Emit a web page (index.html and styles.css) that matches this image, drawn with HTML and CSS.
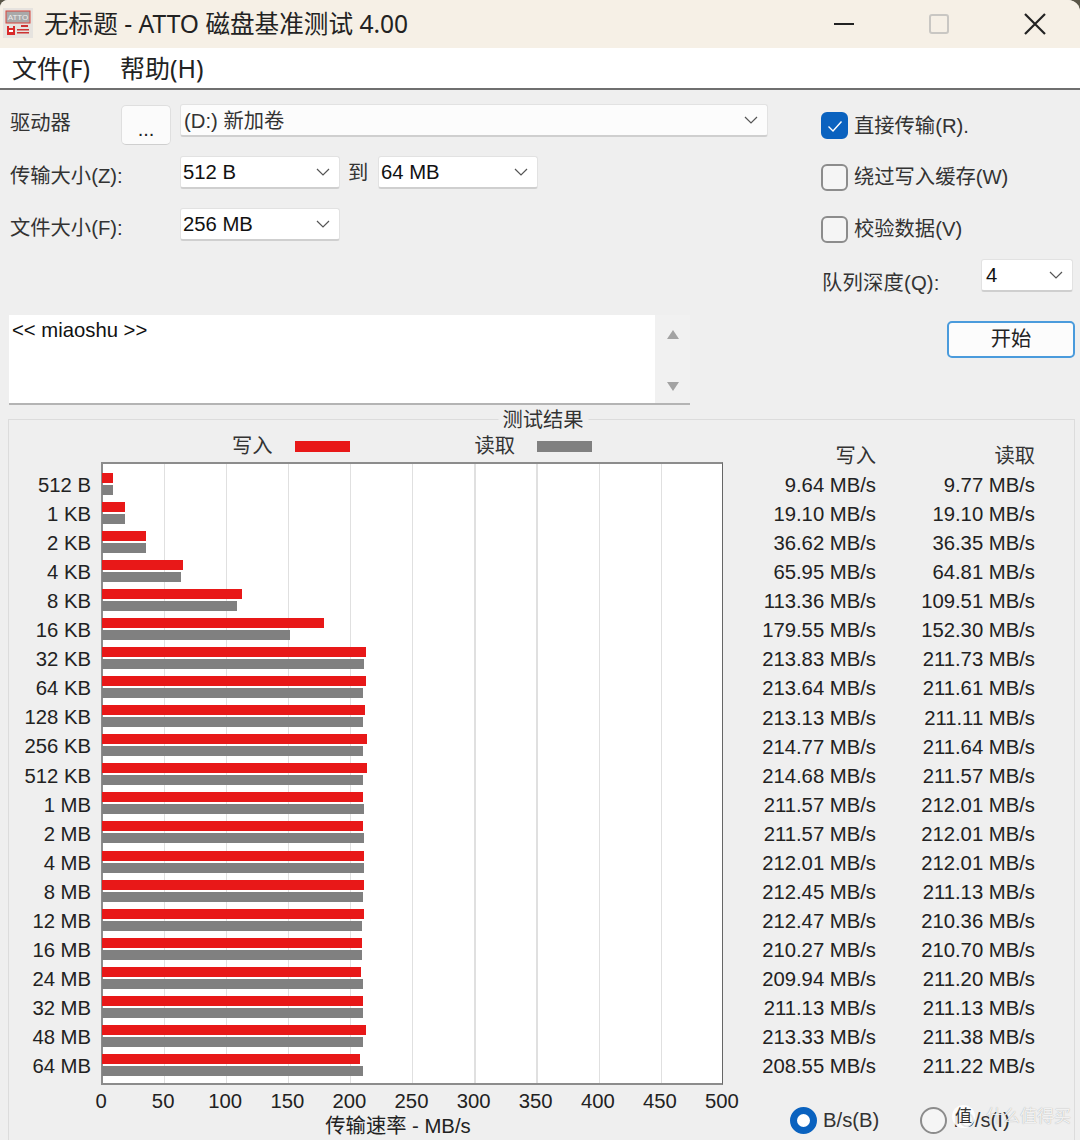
FILE: index.html
```html
<!DOCTYPE html>
<html lang="zh-CN">
<head>
<meta charset="utf-8">
<title>ATTO</title>
<link rel="stylesheet" href="styles.css">
</head>
<body>
<div class="app">
  <header class="titlebar">
    <svg class="appicon" viewBox="0 0 30 30" width="30" height="30">
      <rect width="30" height="30" fill="#e6e3df"/>
      <rect x="3" y="3" width="24" height="12" fill="#a9a9a9" stroke="#d8463f" stroke-width="1"/>
      <text x="15" y="12" font-size="8" font-family="Liberation Sans" fill="#eee" text-anchor="middle">ATTO</text>
      <path d="M4 18h2v2h4v-2h2v9H4z" fill="#d92a2a"/>
      <path d="M6 22h4v2H6z" fill="#fff"/>
      <path d="M18 17h7v2h-7zM14 21h12v1.5H14zM14 24h12v1.5H14z" fill="#c33"/>
    </svg>
    <div class="title">无标题 - ATTO 磁盘基准测试 4.00</div>
    <span class="win-min"></span>
    <span class="win-max"></span>
    <svg class="win-close" viewBox="0 0 22 22" width="22" height="22"><path d="M1 1l20 20M21 1L1 21" stroke="#222" stroke-width="2.2" fill="none"/></svg>
  </header>
  <nav class="menubar"><span>文件(F)</span><span>帮助(H)</span></nav>

  <section class="controls">
    <div class="ctl-left">
      <div class="row">
        <label class="lbl lbl-drive">驱动器</label>
        <button class="dots">...</button>
        <div class="combo combo-drive"><span>(D:) 新加卷</span><svg class="chev" viewBox="0 0 14 8" width="14" height="8"><path d="M1 1l6 6 6-6" fill="none" stroke="#555" stroke-width="1.2"/></svg></div>
      </div>
      <div class="row">
        <label class="lbl">传输大小(Z):</label>
        <div class="combo combo-size"><span>512 B</span><svg class="chev" viewBox="0 0 14 8" width="14" height="8"><path d="M1 1l6 6 6-6" fill="none" stroke="#555" stroke-width="1.2"/></svg></div>
        <span class="to">到</span>
        <div class="combo combo-size"><span>64 MB</span><svg class="chev" viewBox="0 0 14 8" width="14" height="8"><path d="M1 1l6 6 6-6" fill="none" stroke="#555" stroke-width="1.2"/></svg></div>
      </div>
      <div class="row">
        <label class="lbl">文件大小(F):</label>
        <div class="combo combo-size"><span>256 MB</span><svg class="chev" viewBox="0 0 14 8" width="14" height="8"><path d="M1 1l6 6 6-6" fill="none" stroke="#555" stroke-width="1.2"/></svg></div>
      </div>
      <div class="memo">
        <div class="memo-text">&lt;&lt; miaoshu &gt;&gt;</div>
        <div class="memo-scroll">
          <svg viewBox="0 0 12 9" width="12" height="9"><path d="M6 0l6 9H0z" fill="#a3a3a3"/></svg>
          <svg viewBox="0 0 12 9" width="12" height="9"><path d="M0 0h12L6 9z" fill="#a3a3a3"/></svg>
        </div>
      </div>
    </div>
    <div class="ctl-right">
      <div class="check-row"><span class="check on"><svg viewBox="0 0 16 12" width="16" height="12"><path d="M1.5 6.5l4.5 4.5 8.5-9.5" fill="none" stroke="#fff" stroke-width="1.4"/></svg></span><span class="first-check">直接传输(R).</span></div>
      <div class="check-row"><span class="check"></span><span>绕过写入缓存(W)</span></div>
      <div class="check-row"><span class="check"></span><span>校验数据(V)</span></div>
      <div class="queue">
        <label class="queue-lbl">队列深度(Q):</label>
        <div class="combo combo-queue"><span>4</span><svg class="chev" viewBox="0 0 14 8" width="14" height="8"><path d="M1 1l6 6 6-6" fill="none" stroke="#555" stroke-width="1.2"/></svg></div>
      </div>
      <button class="start">开始</button>
    </div>
  </section>

  <section class="results">
    <div class="group-title">测试结果</div>
    <div class="results-body">
      <div class="chart">
        <div class="legend">
          <span>写入</span><i class="swatch red"></i>
          <span class="legend-read">读取</span><i class="swatch gray"></i>
        </div>
        <div class="chart-main">
          <div class="sizes">
            <div>512 B</div><div>1 KB</div><div>2 KB</div><div>4 KB</div><div>8 KB</div><div>16 KB</div><div>32 KB</div><div>64 KB</div><div>128 KB</div><div>256 KB</div><div>512 KB</div><div>1 MB</div><div>2 MB</div><div>4 MB</div><div>8 MB</div><div>12 MB</div><div>16 MB</div><div>24 MB</div><div>32 MB</div><div>48 MB</div><div>64 MB</div>
          </div>
          <div class="plot">
            <div class="bars"><b class="w" style="--v:9.64"></b><b class="r" style="--v:9.77"></b></div>
            <div class="bars"><b class="w" style="--v:19.10"></b><b class="r" style="--v:19.10"></b></div>
            <div class="bars"><b class="w" style="--v:36.62"></b><b class="r" style="--v:36.35"></b></div>
            <div class="bars"><b class="w" style="--v:65.95"></b><b class="r" style="--v:64.81"></b></div>
            <div class="bars"><b class="w" style="--v:113.36"></b><b class="r" style="--v:109.51"></b></div>
            <div class="bars"><b class="w" style="--v:179.55"></b><b class="r" style="--v:152.30"></b></div>
            <div class="bars"><b class="w" style="--v:213.83"></b><b class="r" style="--v:211.73"></b></div>
            <div class="bars"><b class="w" style="--v:213.64"></b><b class="r" style="--v:211.61"></b></div>
            <div class="bars"><b class="w" style="--v:213.13"></b><b class="r" style="--v:211.11"></b></div>
            <div class="bars"><b class="w" style="--v:214.77"></b><b class="r" style="--v:211.64"></b></div>
            <div class="bars"><b class="w" style="--v:214.68"></b><b class="r" style="--v:211.57"></b></div>
            <div class="bars"><b class="w" style="--v:211.57"></b><b class="r" style="--v:212.01"></b></div>
            <div class="bars"><b class="w" style="--v:211.57"></b><b class="r" style="--v:212.01"></b></div>
            <div class="bars"><b class="w" style="--v:212.01"></b><b class="r" style="--v:212.01"></b></div>
            <div class="bars"><b class="w" style="--v:212.45"></b><b class="r" style="--v:211.13"></b></div>
            <div class="bars"><b class="w" style="--v:212.47"></b><b class="r" style="--v:210.36"></b></div>
            <div class="bars"><b class="w" style="--v:210.27"></b><b class="r" style="--v:210.70"></b></div>
            <div class="bars"><b class="w" style="--v:209.94"></b><b class="r" style="--v:211.20"></b></div>
            <div class="bars"><b class="w" style="--v:211.13"></b><b class="r" style="--v:211.13"></b></div>
            <div class="bars"><b class="w" style="--v:213.33"></b><b class="r" style="--v:211.38"></b></div>
            <div class="bars"><b class="w" style="--v:208.55"></b><b class="r" style="--v:211.22"></b></div>
          </div>
        </div>
        <div class="ticks"><span>0</span><span>50</span><span>100</span><span>150</span><span>200</span><span>250</span><span>300</span><span>350</span><span>400</span><span>450</span><span>500</span></div>
        <div class="axis-title">传输速率 - MB/s</div>
      </div>
      <div class="values">
        <div class="vgrid">
          <div class="vh">写入</div><div class="vh">读取</div>
          <div>9.64 MB/s</div><div>9.77 MB/s</div>
          <div>19.10 MB/s</div><div>19.10 MB/s</div>
          <div>36.62 MB/s</div><div>36.35 MB/s</div>
          <div>65.95 MB/s</div><div>64.81 MB/s</div>
          <div>113.36 MB/s</div><div>109.51 MB/s</div>
          <div>179.55 MB/s</div><div>152.30 MB/s</div>
          <div>213.83 MB/s</div><div>211.73 MB/s</div>
          <div>213.64 MB/s</div><div>211.61 MB/s</div>
          <div>213.13 MB/s</div><div>211.11 MB/s</div>
          <div>214.77 MB/s</div><div>211.64 MB/s</div>
          <div>214.68 MB/s</div><div>211.57 MB/s</div>
          <div>211.57 MB/s</div><div>212.01 MB/s</div>
          <div>211.57 MB/s</div><div>212.01 MB/s</div>
          <div>212.01 MB/s</div><div>212.01 MB/s</div>
          <div>212.45 MB/s</div><div>211.13 MB/s</div>
          <div>212.47 MB/s</div><div>210.36 MB/s</div>
          <div>210.27 MB/s</div><div>210.70 MB/s</div>
          <div>209.94 MB/s</div><div>211.20 MB/s</div>
          <div>211.13 MB/s</div><div>211.13 MB/s</div>
          <div>213.33 MB/s</div><div>211.38 MB/s</div>
          <div>208.55 MB/s</div><div>211.22 MB/s</div>
        </div>
        <div class="radios">
          <span class="radio on"></span><span class="radio-lbl">B/s(B)</span>
          <span class="radio second"></span><span class="radio-lbl">IO/s(I)</span>
        </div>
      </div>
    </div>
  </section>

  <div class="watermark"><span class="wm-circle">值</span><span class="wm-text">什么值得买</span></div>
</div>
</body>
</html>
```
FILE: styles.css
```css
* { box-sizing: border-box; }
html, body { margin: 0; padding: 0; background: #5a5648; }
body { width: 1080px; height: 1140px; overflow: hidden; }
.app {
  position: relative;
  width: 1080px;
  height: 1140px;
  overflow: hidden;
  background: #efefef;
  border-radius: 8px 12px 0 0;
  color: #1c1c1c;
  font-family: "Liberation Sans", "Noto Sans CJK SC", sans-serif;
  font-size: 20.3px;
  line-height: 29px;
}

/* title bar */
.titlebar {
  display: flex;
  align-items: center;
  height: 48px;
  background: #f6f0e6;
  padding: 0 34px 0 3px;
}
.appicon { flex: none; margin-top: -2px; }
.title {
  margin-left: 11px;
  font-family: "Noto Sans", "Noto Sans CJK SC", sans-serif;
  font-size: 24.6px;
  line-height: 32px;
  color: #222;
  flex: 1;
}
.win-min { width: 20px; height: 2px; background: #222; }
.win-max { width: 20px; height: 20px; margin-left: 75px; border: 2px solid #c9c7c3; border-radius: 3px; }
.win-close { margin-left: 75px; }

/* menu */
.menubar {
  display: flex;
  gap: 30px;
  height: 42px;
  padding: 4px 0 0 12px;
  background: #fff;
  border-bottom: 2px solid #6f6f6f;
  font-family: "Noto Sans", "Noto Sans CJK SC", sans-serif;
  font-size: 25px;
  line-height: 32px;
  color: #222;
}

/* controls */
.controls { display: flex; height: 329px; }
.ctl-left { width: 768px; padding: 14px 0 0 10px; flex: none; }
.row { display: flex; align-items: flex-start; height: 52px; }
.lbl { width: 170px; padding-top: 6px; color: #333; flex: none; }
.lbl-drive { width: 111px; padding-top: 5px; }
.dots {
  width: 50px;
  height: 40px;
  margin: 1px 9px 0 0;
  padding: 8px 0 0;
  background: #fbfbfb;
  border: 1px solid #dfdfdf;
  border-bottom-color: #cfcfcf;
  border-radius: 5px;
  font: 20px/20px "Liberation Sans", sans-serif;
  color: #222;
}
.combo {
  display: flex;
  align-items: center;
  justify-content: space-between;
  height: 33px;
  padding: 0 9px 0 2px;
  background: #fff;
  border: 1px solid #e2e2e2;
  border-bottom: 2px solid #cfcfcf;
  border-radius: 3px;
  color: #111;
  flex: none;
}
.combo-drive { width: 588px; background: #fcfcfc; padding-left: 3px; color: #333; }
.combo-drive span { padding-top: 2px; }
.combo-size { width: 160px; }
.combo-queue { width: 92px; padding-left: 4px; }
.to { width: 38px; padding: 3px 0 0 8px; color: #333; flex: none; }
.memo {
  display: flex;
  width: 681px;
  height: 90px;
  margin: 55px 0 0 -1px;
  background: #fff;
  border-bottom: 2px solid #b4b4b4;
}
.memo-text { flex: 1; padding: 1px 0 0 3px; color: #111; }
.memo-scroll {
  display: flex;
  flex-direction: column;
  align-items: center;
  justify-content: space-between;
  width: 35px;
  padding: 15px 0 12px;
  background: #f1f1f1;
}
.ctl-right { width: 254px; margin-left: 53px; padding-top: 22px; flex: none; }
.check-row { display: flex; align-items: center; gap: 6px; height: 27px; margin-bottom: 25px; color: #333; }
.first-check { padding-top: 2px; }
.check {
  display: flex;
  align-items: center;
  justify-content: center;
  width: 27px;
  height: 27px;
  background: #f5f5f5;
  border: 2px solid #8c8c8c;
  border-radius: 6px;
  flex: none;
}
.check.on { background: #0a62bf; border-color: #0a62bf; }
.queue { display: flex; align-items: flex-start; justify-content: space-between; margin: -9px 2px 0 1px; }
.queue-lbl { padding-top: 10px; color: #333; letter-spacing: .2px; }
.start {
  display: block;
  width: 128px;
  height: 37px;
  margin: 23px 0 0 126px;
  padding: 0;
  background: #fcfcfc;
  border: 2px solid #4a9bdc;
  border-radius: 5px;
  font: 20.3px/29px "Liberation Sans", "Noto Sans CJK SC", sans-serif;
  color: #222;
}

/* results */
.results {
  margin: 0 5px 0 8px;
  height: 740px;
  border: 1px solid #dcdcdc;
  border-bottom: 0;
}
.group-title {
  width: 90px;
  height: 22px;
  margin: -11px auto 0;
  transform: translateX(1.5px);
  background: #efefef;
  text-align: center;
  line-height: 22px;
  color: #333;
}
.results-body { display: flex; }
.chart { width: 714px; flex: none; }
.legend { display: flex; align-items: center; height: 30.7px; padding: 0 0 0 223px; color: #333; }
.swatch { display: block; width: 55px; height: 11px; margin-left: 22px; }
.swatch.red { background: #e81818; }
.swatch.gray { background: #808080; }
.legend-read { margin-left: 125px; }
.chart-main { display: flex; }
.sizes { width: 82px; padding-top: 9.1px; flex: none; text-align: right; color: #222; }
.sizes div { height: 29.08px; line-height: 29px; }
.plot {
  width: 622px;
  height: 623px;
  margin-left: 10px;
  padding-top: 9px;
  border-style: solid;
  border-width: 2px 1px 2px 2px;
  border-color: #8c8c8c #666 #8c8c8c #8c8c8c;
  background-color: #fff;
  background-image: repeating-linear-gradient(90deg, transparent 0, transparent 60.9px, #e0e0e0 60.9px, #e0e0e0 62.1px);
}
.bars { height: 29.07px; }
.bars b { display: block; height: 10px; margin-left: -1px; width: calc(var(--v) * 1.24px - 1px); }
.bars .w { background: #e81818; margin-bottom: 2px; }
.bars .r { background: #808080; }
.ticks { display: flex; margin-left: 61px; color: #222; }
.ticks span { width: 62.1px; flex: none; text-align: center; height: 32px; line-height: 32px; }
.axis-title { padding-left: 64px; text-align: center; line-height: 26px; color: #222; margin-top: -3.7px; }
.values { flex: 1; padding-top: 10.8px; }
.vgrid {
  display: grid;
  grid-template-columns: 153px 159px;
  grid-auto-rows: 29.08px;
  text-align: right;
  color: #222;
}
.vgrid .vh { color: #333; }
.radios { display: flex; align-items: center; height: 27px; margin: 25px 0 0 67px; color: #333; }
.radio {
  width: 27px;
  height: 27px;
  border-radius: 50%;
  border: 2px solid #8c8c8c;
  background: #f5f5f5;
  flex: none;
}
.radio.on { border: 7px solid #0a62bf; background: #fff; }
.radio.second { margin-left: 41px; }
.radio-lbl { margin-left: 6px; }

/* site watermark over the corner of the picture */
.watermark {
  position: absolute;
  left: 952px;
  top: 1105px;
  display: flex;
  align-items: center;
  gap: 11px;
}
.wm-circle {
  width: 23px;
  height: 23px;
  border-radius: 50%;
  background: rgba(255, 255, 255, .88);
  color: #333;
  font-size: 17px;
  line-height: 23px;
  text-align: center;
}
.wm-text {
  font-size: 17px;
  line-height: 23px;
  color: rgba(255, 255, 255, .85);
  text-shadow: 0 0 1px rgba(0, 0, 0, .35);
}
```
